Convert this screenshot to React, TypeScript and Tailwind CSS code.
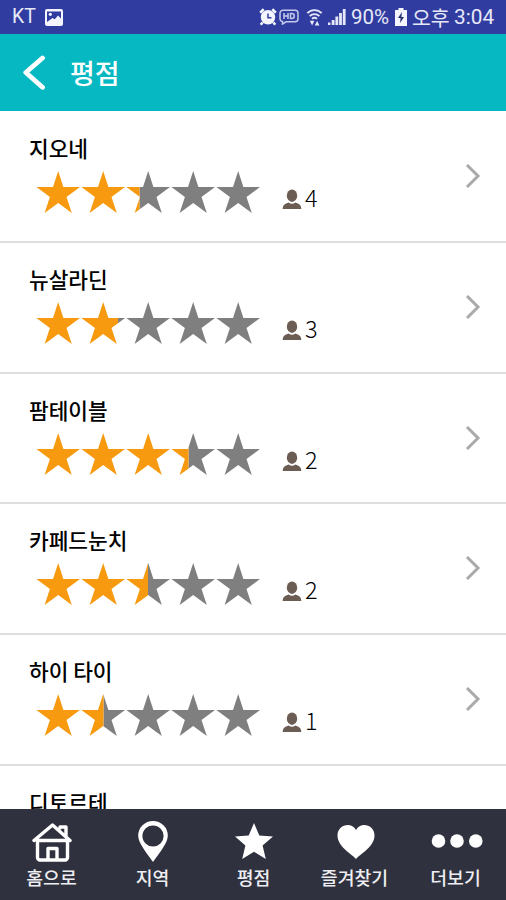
import React from 'react';

interface Restaurant {
  name: string;
  filled: number;
  voters: number;
}

// filled: width of the orange part, one star takes 45px
const restaurants: Restaurant[] = [
  { name: '지오네', filled: 103.5, voters: 4 },
  { name: '뉴살라딘', filled: 82, voters: 3 },
  { name: '팜테이블', filled: 152.5, voters: 2 },
  { name: '카페드눈치', filled: 112, voters: 2 },
  { name: '하이 타이', filled: 67.5, voters: 1 },
];

const STAR = '22.2,0 27.4,16 44,16 30.5,25.9 35.8,42 22.2,32.1 8.6,42 13.9,25.9 0.4,16 17,16';

const starRow = [0, 1, 2, 3, 4].map((i) => (
  <polygon key={i} points={STAR} transform={`translate(${i * 45} 0)`} />
));

const Stars: React.FC<{ filled: number; id: string }> = ({ filled, id }) => (
  <svg width="225" height="43" viewBox="0 0 225 43">
    <defs>
      <clipPath id={`${id}-on`}>
        <rect x="0" y="0" width={filled} height="43" />
      </clipPath>
      <clipPath id={`${id}-off`}>
        <rect x={filled} y="0" width={225 - filled} height="43" />
      </clipPath>
    </defs>
    <g fill="#7f7f7f" clipPath={`url(#${id}-off)`}>{starRow}</g>
    <g fill="#f79a10" clipPath={`url(#${id}-on)`}>{starRow}</g>
  </svg>
);

const PersonIcon: React.FC = () => (
  <svg width="20" height="21" viewBox="0 0 20 21" fill="#6b5d54">
    <ellipse cx="10" cy="6.7" rx="5.2" ry="6.2" />
    <path d="M0.7 20 C0.7 15.8 3 14.6 6.6 13.4 C8.6 15.2 11.4 15.2 13.4 13.4 C17 14.6 19.3 15.8 19.3 20 Z" />
  </svg>
);

const StatusBar: React.FC = () => (
  <div className="flex h-[34px] shrink-0 items-center bg-[#303c9f] pl-3 pr-[11px] text-[#e6e8f8]">
    <span className="font-[Roboto] text-[19.5px]">KT</span>
    <svg className="ml-[9px]" width="18" height="17" viewBox="0 0 18 17">
      <rect width="18" height="17" rx="2" fill="#f4f5ff" />
      <path d="M2 2.5h14v7l-3-3-3.2 3.8L7.5 9 2 13z" fill="#303c9f" />
      <circle cx="5.3" cy="5.3" r="1.6" fill="#f4f5ff" />
    </svg>
    <div className="ml-auto flex items-center">
      <svg width="18" height="18" viewBox="0 0 18 18">
        <circle cx="9" cy="9.3" r="7.2" fill="#f4f5ff" />
        <path d="M1.2 4.7L4.7 1.3M16.8 4.7l-3.5-3.4M3.5 14.5l-1.7 2.3M14.5 14.5l1.7 2.3" stroke="#f4f5ff" strokeWidth="2.6" />
        <path d="M9 5.5v4.2h3.5" fill="none" stroke="#303c9f" strokeWidth="1.5" />
      </svg>
      <svg className="ml-[2px]" width="20" height="16" viewBox="0 0 20 16" fill="none" stroke="#c5caec" strokeWidth="1.5">
        <path d="M4 1.2h12a3 3 0 0 1 3 3v5.6a3 3 0 0 1-3 3H7l-3.5 2.3v-2.5A3 3 0 0 1 1 9.8V4.2a3 3 0 0 1 3-3z" />
        <path d="M5 4v6M9 4v6M5 7h4M11.5 4.5v5h1.2c3.4 0 3.4-5 0-5z" />
      </svg>
      <svg className="ml-[7px]" width="17" height="19" viewBox="0 0 17 19" fill="none" stroke="#e6e8f8" strokeWidth="1.8">
        <path d="M1.3 5.2a10 10 0 0 1 14.4 0M3.6 8.2a7 7 0 0 1 9.8 0M6 10.8a3.8 3.8 0 0 1 5 0" />
        <path d="M3.8 12.7h4.6L6.1 17.5zM8.8 17.5h4.6l-2.3-4.8z" fill="#e6e8f8" stroke="none" />
      </svg>
      <svg className="ml-[5px]" width="18" height="18" viewBox="0 0 18 18" fill="#e6e8f8">
        <rect x="0" y="14.5" width="2.4" height="2.5" />
        <rect x="3.7" y="12" width="2.8" height="5" />
        <rect x="7.4" y="8.5" width="2.8" height="8.5" />
        <rect x="11.1" y="5" width="2.8" height="12" />
        <rect x="14.8" y="1" width="2.8" height="16" />
      </svg>
      <span className="ml-[5px] w-[40px] whitespace-nowrap font-[Roboto] text-[20.5px] leading-[34px]">90%</span>
      <svg className="ml-[4px]" width="12" height="18" viewBox="0 0 12 18">
        <path d="M3.5 0h5v2H12v16H0V2h3.5z" fill="#f4f5ff" />
        <path d="M7 4L3 10h2.6L5 15l4-6H6.4z" fill="#26306f" />
      </svg>
      <span className="ml-[5px] w-[38px] whitespace-nowrap font-['Noto_Sans_CJK_KR',sans-serif] text-[20.5px] leading-[34px]">오후</span>
      <span className="ml-[4px] w-[41px] whitespace-nowrap font-[Roboto] text-[20.8px] leading-[34px]">3:04</span>
    </div>
  </div>
);

const NavItem: React.FC<{ label: string; children: React.ReactNode }> = ({ label, children }) => (
  <div className="flex flex-1 flex-col items-center">
    <div className="flex h-[54px] items-end">{children}</div>
    <span className="mt-px whitespace-nowrap text-[18.3px] font-medium leading-[26px] text-[#eeeef2]">{label}</span>
  </div>
);

const App: React.FC = () => {
  return (
    <div className="flex h-[900px] w-[506px] flex-col overflow-hidden bg-white font-['Noto_Sans_CJK_KR',sans-serif]">
      <StatusBar />
      <header className="flex h-[77px] shrink-0 items-center bg-[#06b8c2] pl-[22px] text-white">
        <svg width="24" height="36" viewBox="0 0 24 36" fill="none" stroke="#fff" strokeWidth="4.8" strokeLinecap="round" strokeLinejoin="round">
          <path d="M20.5 3L3.8 17.5L20.5 32.3" />
        </svg>
        <h1 className="ml-[24px] mt-px text-[27px] font-medium leading-[40px]">평점</h1>
      </header>

      <main className="min-h-0 flex-1 overflow-hidden pt-px">
        {restaurants.map((r, i) => (
          <div key={r.name} className="flex h-[130.8px] items-start border-b-2 border-[#dedede] pl-7">
            <div className="pt-[21px]">
              <h2 className="ml-px text-[21.4px] font-medium leading-[30px] text-black">{r.name}</h2>
              <div className="mt-2 flex pl-2">
                <Stars filled={r.filled} id={`rating-${i}`} />
                <div className="ml-[21px] flex pt-[18px]">
                  <PersonIcon />
                  <span className="ml-[3px] -mt-[5px] text-[23.5px] font-light leading-[26px] text-black">
                    {r.voters}
                  </span>
                </div>
              </div>
            </div>
            <svg className="ml-auto mr-[25px] mt-[51px]" width="16" height="26" viewBox="0 0 16 26" fill="none" stroke="#aaaaaa" strokeWidth="3">
              <path d="M2 2L13 13L2 24" />
            </svg>
          </div>
        ))}
        <div className="pl-7 pt-[21px]">
          <h2 className="ml-px text-[21.4px] font-medium leading-[30px] text-black">디토르테</h2>
        </div>
      </main>

      <nav className="flex h-[91px] shrink-0 bg-[#2f313e] pl-px">
        <NavItem label="홈으로">
          <svg width="40" height="43" viewBox="0 0 40 43" fill="none" stroke="#fff" strokeWidth="3.4" strokeLinecap="round" strokeLinejoin="round">
            <path d="M2 20.5L20.5 5L38 20.5M5.5 20.5h30M28 8V7h6v9" />
            <path d="M5.5 21v16.5a2.5 2.5 0 0 0 2.5 2.5h25a2.5 2.5 0 0 0 2.5-2.5V21" />
            <path d="M16 39.5V28.5h9v11" />
          </svg>
        </NavItem>
        <NavItem label="지역">
          <svg width="32" height="43" viewBox="0 0 32 43">
            <path fillRule="evenodd" fill="#fff" d="M16 1A14.8 14.8 0 0 0 1.2 15.8C1.2 23 9 32 16 42C23 32 30.8 23 30.8 15.8A14.8 14.8 0 0 0 16 1zM16 5.4a10.6 10.6 0 1 1 0 21.2a10.6 10.6 0 0 1 0-21.2z" />
          </svg>
        </NavItem>
        <NavItem label="평점">
          <svg className="mb-[3px]" width="40" height="38" viewBox="0 0 40 38" fill="#fff">
            <path d="M20 1l5.3 12.4L39 14.5 28.6 23.4 31.8 37 20 29.7 8.2 37l3.2-13.6L1 14.5l13.7-1.1z" />
          </svg>
        </NavItem>
        <NavItem label="즐겨찾기">
          <svg className="mb-[3px] ml-[3px]" width="38" height="36" viewBox="0 0 38 36" fill="#fff">
            <path d="M19 35C16 31 0.5 23 0.5 11.5C0.5 0.5 14.5-2.5 19 6C23.5-2.5 37.5 0.5 37.5 11.5C37.5 23 22 31 19 35z" />
          </svg>
        </NavItem>
        <NavItem label="더보기">
          <svg className="mb-[15px] ml-[2px]" width="52" height="14" viewBox="0 0 52 14" fill="#fff">
            <circle cx="7.5" cy="7" r="6.8" />
            <circle cx="26" cy="7" r="6.8" />
            <circle cx="44.8" cy="7" r="6.8" />
          </svg>
        </NavItem>
      </nav>
    </div>
  );
};

export default App;
